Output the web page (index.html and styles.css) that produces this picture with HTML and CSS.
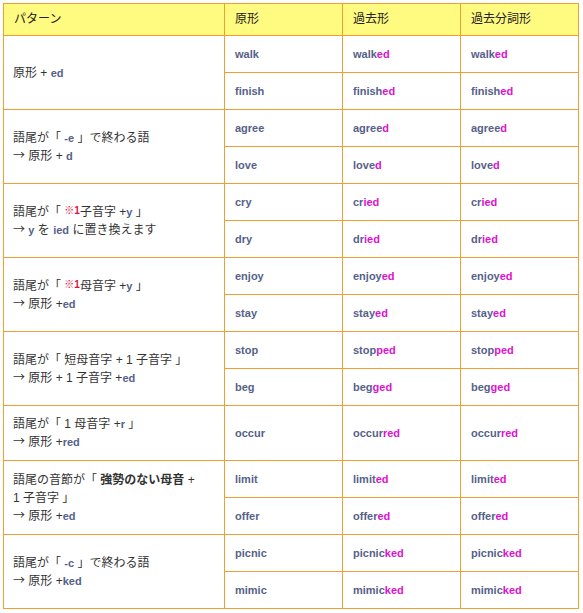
FILE: index.html
```html
<!DOCTYPE html>
<html lang="ja">
<head>
<meta charset="utf-8">
<link rel="stylesheet" href="styles.css">
</head>
<body>
<table class="tbl">
  <colgroup>
    <col class="c-pat"><col class="c-form"><col class="c-form"><col class="c-form">
  </colgroup>
  <thead>
    <tr><th>パターン</th><th>原形</th><th>過去形</th><th>過去分詞形</th></tr>
  </thead>
  <tbody>
    <tr>
      <td class="pat" rowspan="2">原形 + <b class="w">ed</b></td>
      <td><b class="w">walk</b></td><td><b class="w">walk<span class="s">ed</span></b></td><td><b class="w">walk<span class="s">ed</span></b></td>
    </tr>
    <tr>
      <td><b class="w">finish</b></td><td><b class="w">finish<span class="s">ed</span></b></td><td><b class="w">finish<span class="s">ed</span></b></td>
    </tr>
    <tr>
      <td class="pat" rowspan="2">語尾が「 <b class="w">-e</b> 」で終わる語<br><span class="arr">→</span> 原形 + <b class="w">d</b></td>
      <td><b class="w">agree</b></td><td><b class="w">agree<span class="s">d</span></b></td><td><b class="w">agree<span class="s">d</span></b></td>
    </tr>
    <tr>
      <td><b class="w">love</b></td><td><b class="w">love<span class="s">d</span></b></td><td><b class="w">love<span class="s">d</span></b></td>
    </tr>
    <tr>
      <td class="pat" rowspan="2">語尾が「 <b class="note">※1</b>子音字 +<b class="w">y</b> 」<br><span class="arr">→</span> <b class="w">y</b> を <b class="w">ied</b> に置き換えます</td>
      <td><b class="w">cry</b></td><td><b class="w">cr<span class="s">ied</span></b></td><td><b class="w">cr<span class="s">ied</span></b></td>
    </tr>
    <tr>
      <td><b class="w">dry</b></td><td><b class="w">dr<span class="s">ied</span></b></td><td><b class="w">dr<span class="s">ied</span></b></td>
    </tr>
    <tr>
      <td class="pat" rowspan="2">語尾が「 <b class="note">※1</b>母音字 +<b class="w">y</b> 」<br><span class="arr">→</span> 原形 +<b class="w">ed</b></td>
      <td><b class="w">enjoy</b></td><td><b class="w">enjoy<span class="s">ed</span></b></td><td><b class="w">enjoy<span class="s">ed</span></b></td>
    </tr>
    <tr>
      <td><b class="w">stay</b></td><td><b class="w">stay<span class="s">ed</span></b></td><td><b class="w">stay<span class="s">ed</span></b></td>
    </tr>
    <tr>
      <td class="pat" rowspan="2">語尾が「 短母音字 + 1 子音字 」<br><span class="arr">→</span> 原形 + 1 子音字 +<b class="w">ed</b></td>
      <td><b class="w">stop</b></td><td><b class="w">stop<span class="s">ped</span></b></td><td><b class="w">stop<span class="s">ped</span></b></td>
    </tr>
    <tr>
      <td><b class="w">beg</b></td><td><b class="w">beg<span class="s">ged</span></b></td><td><b class="w">beg<span class="s">ged</span></b></td>
    </tr>
    <tr>
      <td class="pat">語尾が「 1 母音字 +<b class="w">r</b> 」<br><span class="arr">→</span> 原形 +<b class="w">red</b></td>
      <td><b class="w">occur</b></td><td><b class="w">occur<span class="s">red</span></b></td><td><b class="w">occur<span class="s">red</span></b></td>
    </tr>
    <tr>
      <td class="pat" rowspan="2">語尾の音節が「 <b class="strong">強勢のない母音</b> +<br>1 子音字 」<br><span class="arr">→</span> 原形 +<b class="w">ed</b></td>
      <td><b class="w">limit</b></td><td><b class="w">limit<span class="s">ed</span></b></td><td><b class="w">limit<span class="s">ed</span></b></td>
    </tr>
    <tr>
      <td><b class="w">offer</b></td><td><b class="w">offer<span class="s">ed</span></b></td><td><b class="w">offer<span class="s">ed</span></b></td>
    </tr>
    <tr>
      <td class="pat" rowspan="2">語尾が「 <b class="w">-c</b> 」で終わる語<br><span class="arr">→</span> 原形 +<b class="w">ked</b></td>
      <td><b class="w">picnic</b></td><td><b class="w">picnic<span class="s">ked</span></b></td><td><b class="w">picnic<span class="s">ked</span></b></td>
    </tr>
    <tr>
      <td><b class="w">mimic</b></td><td><b class="w">mimic<span class="s">ked</span></b></td><td><b class="w">mimic<span class="s">ked</span></b></td>
    </tr>
  </tbody>
</table>
</body>
</html>
```

FILE: styles.css
```css
html, body {
  margin: 0;
  background: #ffffff;
}
body {
  padding: 3px 0 0 3px;
  font-family: "Liberation Sans", "Noto Sans CJK JP", sans-serif;
  font-size: 12px;
  color: #333333;
}
.tbl {
  border-collapse: collapse;
  table-layout: fixed;
  width: 575px;
}
.c-pat { width: 221px; }
.c-form { width: 118px; }
.tbl th, .tbl td {
  border: 1px solid #f0a030;
  padding: 9px 9px 9px 10px;
  height: 18px;
  line-height: 18px;
  text-align: left;
  vertical-align: middle;
}
.tbl th {
  background: #fffa80;
  font-weight: normal;
  color: #222222;
  font-size: 12px;
  padding-top: 6px;
  padding-bottom: 6px;
  height: 19px;
  line-height: 19px;
}
.tbl td.pat {
  padding-left: 9px;
  font-size: 12px;
  color: #333333;
}
.arr {
  font-family: "Noto Sans CJK JP", sans-serif;
  line-height: 1;
}
.w {
  color: #566189;
  font-weight: bold;
  font-size: 11px;
  line-height: 1;
}
.s {
  color: #e010d0;
}
.note {
  color: #e0103c;
  font-size: 10px;
  vertical-align: 2px;
  line-height: 0;
}
.strong {
  font-weight: bold;
  color: #333333;
  line-height: 1;
}
```
